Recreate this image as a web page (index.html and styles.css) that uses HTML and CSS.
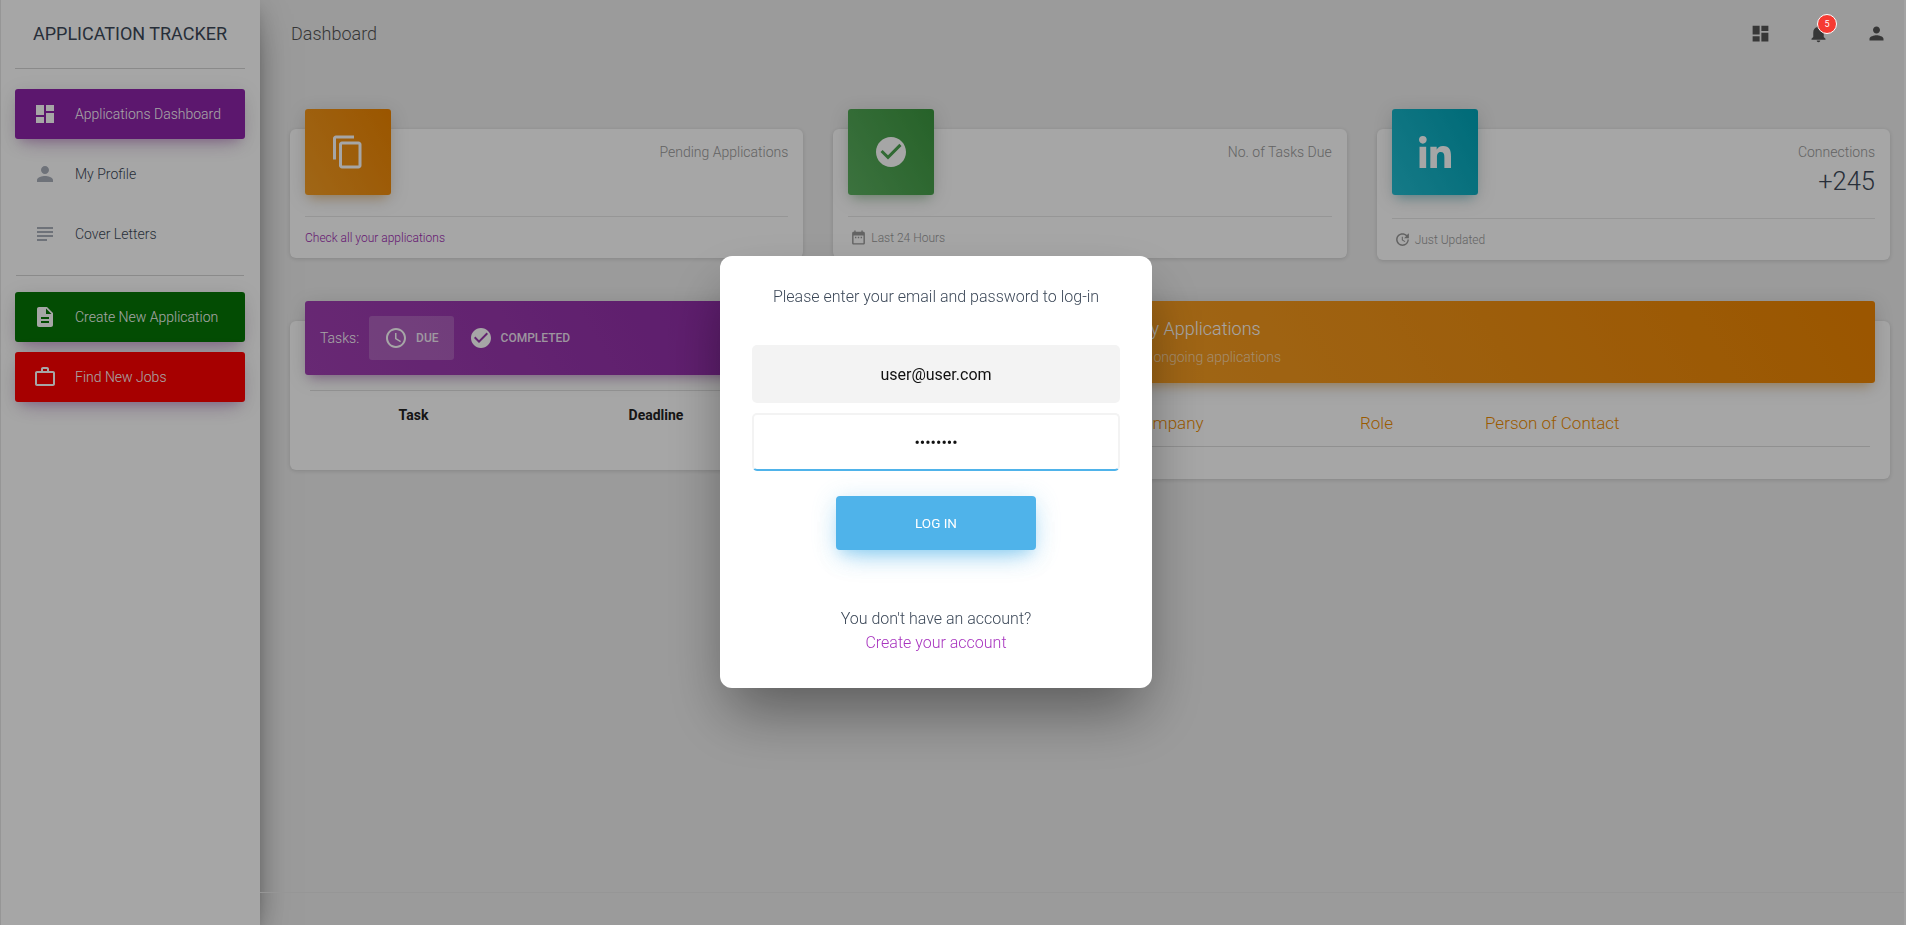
FILE: index.html
```html
<!DOCTYPE html>
<html lang="en">
<head>
  <meta charset="UTF-8">
  <title>Application Tracker</title>
  <link rel="stylesheet" href="styles.css">
</head>
<body>
  <div class="app">
    <aside class="sidebar">
      <div class="brand">APPLICATION TRACKER</div>
      <nav class="side-nav">
        <a class="side-link side-active" href="#">
          <svg class="icon" viewBox="0 0 24 24"><path d="M3 13h8V3H3v10zm0 8h8v-6H3v6zm10 0h8V11h-8v10zm0-18v6h8V3h-8z"/></svg>
          Applications Dashboard
        </a>
        <a class="side-link" href="#">
          <svg class="icon" viewBox="0 0 24 24"><path d="M12 12c2.21 0 4-1.79 4-4s-1.79-4-4-4-4 1.79-4 4 1.79 4 4 4zm0 2c-2.67 0-8 1.34-8 4v2h16v-2c0-2.66-5.33-4-8-4z"/></svg>
          My Profile
        </a>
        <a class="side-link" href="#">
          <svg class="icon" viewBox="0 0 24 24"><path d="M14 17H4v2h10v-2zm6-8H4v2h16V9zM4 15h16v-2H4v2zM4 5v2h16V5H4z"/></svg>
          Cover Letters
        </a>
      </nav>
      <div class="side-divider"></div>
      <nav class="side-nav">
        <a class="side-link side-green" href="#">
          <svg class="icon" viewBox="0 0 24 24"><path d="M14 2H6c-1.1 0-1.99.9-1.99 2L4 20c0 1.1.89 2 2 2h12c1.1 0 2-.9 2-2V8l-6-6zm2 16H8v-2h8v2zm0-4H8v-2h8v2zm-3-5V3.5L18.5 9H13z"/></svg>
          Create New Application
        </a>
        <a class="side-link side-red" href="#">
          <svg class="icon" viewBox="0 0 24 24"><path d="M14 6V4h-4v2h4zM4 8v11h16V8H4zm16-2c1.11 0 2 .89 2 2v11c0 1.11-.89 2-2 2H4c-1.11 0-2-.89-2-2l.01-11c0-1.11.88-2 1.99-2h4V4c0-1.11.89-2 2-2h4c1.11 0 2 .89 2 2v2h4z"/></svg>
          Find New Jobs
        </a>
      </nav>
    </aside>

    <main class="main">
      <header class="topbar">
        <span class="page-title">Dashboard</span>
        <div class="top-icons">
          <svg class="top-icon" viewBox="0 0 24 24"><path d="M3 13h8V3H3v10zm0 8h8v-6H3v6zm10 0h8V11h-8v10zm0-18v6h8V3h-8z"/></svg>
          <span class="bell">
            <svg class="top-icon" viewBox="0 0 24 24"><path d="M12 22c1.1 0 2-.9 2-2h-4c0 1.1.89 2 2 2zm6-6v-5c0-3.07-1.64-5.64-4.5-6.32V4c0-.83-.67-1.5-1.5-1.5s-1.5.67-1.5 1.5v.68C7.63 5.36 6 7.92 6 11v5l-2 2v1h16v-1l-2-2z"/></svg>
            <span class="badge">5</span>
          </span>
          <svg class="top-icon" viewBox="0 0 24 24"><path d="M12 12c2.21 0 4-1.79 4-4s-1.79-4-4-4-4 1.79-4 4 1.79 4 4 4zm0 2c-2.67 0-8 1.34-8 4v2h16v-2c0-2.66-5.33-4-8-4z"/></svg>
        </div>
      </header>

      <section class="stats">
        <div class="card stat-card">
          <div class="stat-head">
            <div class="stat-icon bg-orange">
              <svg class="stat-svg" viewBox="0 0 24 24"><path d="M16 1H4c-1.1 0-2 .9-2 2v14h2V3h12V1zm3 4H8c-1.1 0-2 .9-2 2v14c0 1.1.9 2 2 2h11c1.1 0 2-.9 2-2V7c0-1.1-.9-2-2-2zm0 16H8V7h11v14z"/></svg>
            </div>
            <div class="stat-text"><p class="stat-label">Pending Applications</p></div>
          </div>
          <div class="stat-foot"><a class="foot-link" href="#">Check all your applications</a></div>
        </div>

        <div class="card stat-card">
          <div class="stat-head">
            <div class="stat-icon bg-green">
              <svg class="stat-svg" viewBox="0 0 24 24"><path d="M12 2C6.48 2 2 6.48 2 12s4.48 10 10 10 10-4.48 10-10S17.52 2 12 2zm-2 15l-5-5 1.41-1.41L10 14.17l7.59-7.59L19 8l-9 9z"/></svg>
            </div>
            <div class="stat-text"><p class="stat-label">No. of Tasks Due</p></div>
          </div>
          <div class="stat-foot">
            <svg class="foot-icon" viewBox="0 0 24 24"><path d="M9 11H7v2h2v-2zm4 0h-2v2h2v-2zm4 0h-2v2h2v-2zm2-7h-1V2h-2v2H8V2H6v2H5c-1.11 0-1.99.9-1.99 2L3 20c0 1.1.89 2 2 2h14c1.1 0 2-.9 2-2V6c0-1.1-.9-2-2-2zm0 16H5V9h14v11z"/></svg>
            Last 24 Hours
          </div>
        </div>

        <div class="card stat-card">
          <div class="stat-head">
            <div class="stat-icon bg-teal">
              <svg class="linkedin" viewBox="0 0 448 448"><path d="M100.28 448H7.4V148.9h92.88zM53.79 108.1C24.09 108.1 0 83.5 0 53.8a53.79 53.79 0 0 1 107.58 0c0 29.7-24.1 54.3-53.79 54.3zM447.9 448h-92.68V302.4c0-34.7-.7-79.2-48.29-79.2-48.29 0-55.69 37.7-55.69 76.7V448h-92.78V148.9h89.08v40.8h1.3c12.4-23.5 42.69-48.3 87.88-48.3 94 0 111.28 61.9 111.28 142.3V448z"/></svg>
            </div>
            <div class="stat-text">
              <p class="stat-label">Connections</p>
              <h3 class="stat-value">+245</h3>
            </div>
          </div>
          <div class="stat-foot">
            <svg class="foot-icon" viewBox="0 0 24 24"><path d="M21 10.12h-6.78l2.74-2.82c-2.73-2.7-7.15-2.8-9.88-.1-2.73 2.71-2.73 7.08 0 9.79s7.15 2.71 9.88 0C18.32 15.65 19 14.08 19 12.1h2c0 1.98-.88 4.55-2.64 6.29-3.51 3.48-9.21 3.48-12.72 0-3.5-3.47-3.53-9.11-.02-12.58s9.14-3.47 12.65 0L21 3v7.12zM12.5 8v4.25l3.5 2.08-.72 1.21L11 13V8h1.5z"/></svg>
            Just Updated
          </div>
        </div>
      </section>

      <section class="panels">
        <div class="card panel">
          <div class="panel-head tasks-head bg-purple">
            <span class="tabs-label">Tasks:</span>
            <span class="tab tab-active">
              <svg class="icon" viewBox="0 0 24 24"><path d="M11.99 2C6.47 2 2 6.48 2 12s4.47 10 9.99 10C17.52 22 22 17.52 22 12S17.52 2 11.99 2zM12 20c-4.42 0-8-3.58-8-8s3.58-8 8-8 8 3.58 8 8-3.58 8-8 8zm.5-13H11v6l5.25 3.15.75-1.23-4.5-2.67z"/></svg>
              DUE
            </span>
            <span class="tab">
              <svg class="icon" viewBox="0 0 24 24"><path d="M12 2C6.48 2 2 6.48 2 12s4.48 10 10 10 10-4.48 10-10S17.52 2 12 2zm-2 15l-5-5 1.41-1.41L10 14.17l7.59-7.59L19 8l-9 9z"/></svg>
              COMPLETED
            </span>
          </div>
          <table class="tasks-table">
            <thead>
              <tr><th class="col-task">Task</th><th class="col-deadline">Deadline</th><th></th></tr>
            </thead>
          </table>
        </div>

        <div class="card panel">
          <div class="panel-head apps-head bg-orange">
            <h4 class="apps-title">My Applications</h4>
            <p class="apps-sub">All ongoing applications</p>
          </div>
          <table class="apps-table">
            <thead>
              <tr><th class="col-company">Company</th><th class="col-role">Role</th><th>Person of Contact</th></tr>
            </thead>
          </table>
        </div>
      </section>

      <footer class="page-foot"></footer>
    </main>
  </div>

  <div class="backdrop"></div>

  <div class="login-modal">
    <p class="login-text">Please enter your email and password to log-in</p>
    <form class="login-form" onsubmit="return false">
      <input class="login-input" type="email" value="user@user.com">
      <input class="login-input login-focus" type="password" value="password">
      <button class="login-btn" type="submit">LOG IN</button>
    </form>
    <p class="login-alt">You don't have an account?<br><a href="#">Create your account</a></p>
  </div>
</body>
</html>
```
FILE: styles.css
```css
* {
  box-sizing: border-box;
}

body {
  margin: 0;
  background: #eeeeee;
  font-family: Roboto, "Liberation Sans", sans-serif;
  font-weight: 300;
  font-size: 14px;
  color: #3c4858;
  overflow: hidden;
}

a {
  text-decoration: none;
}

p, h3, h4 {
  margin: 0;
}

.app {
  display: flex;
  height: 100vh;
}

/* sidebar */
.sidebar {
  width: 260px;
  flex-shrink: 0;
  border-left: 1px solid #e6e6e6;
  background: #ffffff;
  box-shadow: 0 16px 38px -12px rgba(0, 0, 0, 0.56), 0 4px 25px 0 rgba(0, 0, 0, 0.12), 0 8px 10px -5px rgba(0, 0, 0, 0.2);
}

.brand {
  height: 69px;
  margin: 0 15px 20px 14px;
  border-bottom: 1px solid #d5d5d5;
  font-size: 18px;
  font-weight: 400;
  line-height: 68px;
  text-align: center;
}

.side-nav {
  display: flex;
  flex-direction: column;
  gap: 10px;
  padding: 0 15px 0 14px;
}

.side-link {
  display: flex;
  align-items: center;
  gap: 18px;
  height: 50px;
  padding-left: 18px;
  border-radius: 3px;
  color: #3c4858;
  fill: #a9afbb;
}

.side-active {
  background: #8e24aa;
  color: #ffffff;
  fill: #ffffff;
  box-shadow: 0 12px 20px -10px rgba(156, 39, 176, 0.28), 0 4px 20px 0 rgba(0, 0, 0, 0.12), 0 7px 8px -5px rgba(156, 39, 176, 0.2);
}

.side-green {
  background: #067506;
  color: #ffffff;
  fill: #ffffff;
  box-shadow: 0 12px 20px -10px rgba(156, 39, 176, 0.28), 0 4px 20px 0 rgba(0, 0, 0, 0.12), 0 7px 8px -5px rgba(156, 39, 176, 0.2);
}

.side-red {
  background: #ff0000;
  color: #ffffff;
  fill: #ffffff;
  box-shadow: 0 12px 20px -10px rgba(156, 39, 176, 0.28), 0 4px 20px 0 rgba(0, 0, 0, 0.12), 0 7px 8px -5px rgba(156, 39, 176, 0.2);
}

.side-divider {
  height: 1px;
  margin: 16px 16px 16px 15px;
  background: #d5d5d5;
}

.icon {
  width: 24px;
  height: 24px;
  flex-shrink: 0;
}

/* main area */
.main {
  flex: 1;
  min-width: 0;
  display: flex;
  flex-direction: column;
  padding: 0 14px 0 30px;
  border-right: 2px solid #fafafa;
}

.topbar {
  display: flex;
  align-items: center;
  justify-content: space-between;
  height: 66px;
  margin-bottom: 63px;
  padding-left: 1px;
}

.page-title {
  font-size: 18px;
  color: #555555;
}

.top-icons {
  display: flex;
  align-items: center;
  gap: 37px;
  margin-right: 3px;
}

.top-icon {
  display: block;
  width: 21px;
  height: 21px;
  fill: #555555;
}

.bell {
  position: relative;
}

.badge {
  position: absolute;
  z-index: 20;
  top: -9px;
  right: -8px;
  width: 20px;
  height: 20px;
  border: 1px solid #ffffff;
  border-radius: 50%;
  background: #f63a32;
  color: #ffffff;
  font-size: 9px;
  font-weight: 400;
  line-height: 18px;
  text-align: center;
}

.card {
  background: #ffffff;
  border-radius: 6px;
  box-shadow: 0 1px 4px 0 rgba(0, 0, 0, 0.14);
}

.stats {
  display: grid;
  grid-template-columns: repeat(3, 1fr);
  gap: 30px;
  align-items: start;
  height: 131px;
  margin-bottom: 61px;
}

.stat-card {
  padding: 0 15px;
}

.stat-head {
  display: flex;
  justify-content: space-between;
  align-items: flex-start;
}

.stat-icon {
  display: flex;
  align-items: center;
  justify-content: center;
  width: 86px;
  height: 86px;
  margin: -20px 0 21px;
  border-radius: 3px;
}

.stat-svg {
  width: 36px;
  height: 36px;
  fill: #ffffff;
}

.linkedin {
  width: 32px;
  height: 32px;
  fill: #ffffff;
}

.bg-orange {
  background: linear-gradient(60deg, #f69e24, #ee8400);
  box-shadow: 0 4px 20px 0 rgba(0, 0, 0, 0.14), 0 7px 10px -5px rgba(255, 152, 0, 0.4);
}

.bg-green {
  background: linear-gradient(60deg, #5cb060, #3b963f);
  box-shadow: 0 4px 20px 0 rgba(0, 0, 0, 0.14), 0 7px 10px -5px rgba(76, 175, 80, 0.4);
}

.bg-teal {
  background: linear-gradient(60deg, #22bcd0, #00a4b8);
  box-shadow: 0 4px 20px 0 rgba(0, 0, 0, 0.14), 0 7px 10px -5px rgba(0, 172, 193, 0.4);
}

.bg-purple {
  background: linear-gradient(60deg, #a03fb2, #8420a0);
  box-shadow: 0 4px 20px 0 rgba(0, 0, 0, 0.14), 0 7px 10px -5px rgba(156, 39, 176, 0.4);
}

.stat-text {
  padding-top: 13px;
  text-align: right;
}

.stat-label {
  line-height: 20px;
  color: #999999;
}

.stat-value {
  margin: 4px 0 22px;
  font-size: 25.5px;
  font-weight: 300;
  line-height: 30px;
}

.stat-foot {
  display: flex;
  align-items: center;
  gap: 4px;
  height: 42px;
  border-top: 1px solid #e7e7e7;
  font-size: 12px;
  color: #999999;
}

.foot-link {
  color: #9c27b0;
}

.foot-icon {
  width: 17px;
  height: 17px;
  margin-left: 2px;
  fill: #999999;
}

/* tasks and applications */
.panels {
  display: grid;
  grid-template-columns: repeat(2, 1fr);
  gap: 30px;
  align-items: start;
}

.panel-head {
  margin: -20px 15px 0;
  border-radius: 3px;
  color: #ffffff;
}

.tasks-head {
  display: flex;
  align-items: center;
  height: 74px;
  padding-left: 15px;
}

.tabs-label {
  margin-right: 10px;
}

.tab {
  display: flex;
  align-items: center;
  gap: 8px;
  height: 44px;
  padding: 0 15px;
  border-radius: 3px;
  font-size: 12px;
  font-weight: 500;
  color: rgba(255, 255, 255, 0.88);
  fill: #ffffff;
}

.tab-active {
  background: rgba(255, 255, 255, 0.2);
}

.tasks-table,
.apps-table {
  border-collapse: collapse;
  table-layout: fixed;
}

.tasks-table {
  width: calc(100% - 40px);
  margin: 15px 20px 0;
  border-top: 1px solid #dddddd;
}

.tasks-table tr {
  height: 79px;
  vertical-align: top;
}

.tasks-table th {
  padding: 16px 0 0;
  font-size: 14px;
  font-weight: 700;
  color: #222222;
}

.col-task {
  width: 207px;
}

.col-deadline {
  width: 278px;
}

.apps-head {
  height: 82px;
  padding: 18px 15px 0;
}

.apps-title {
  font-size: 18px;
  font-weight: 300;
  line-height: 20px;
}

.apps-sub {
  margin-top: 8px;
  font-size: 14px;
  line-height: 20px;
  color: rgba(255, 255, 255, 0.62);
}

.apps-table {
  width: calc(100% - 35px);
  margin: 0 20px 32px 15px;
  border-bottom: 1px solid #dddddd;
}

.apps-table th {
  height: 63px;
  padding: 17px 12px 0;
  font-size: 17px;
  font-weight: 300;
  color: #ee8c00;
  text-align: left;
}

.col-company {
  width: 228px;
}

.col-role {
  width: 125px;
}

.page-foot {
  height: 33px;
  margin: auto -14px 0 -30px;
  border-top: 1px solid #e7e7e7;
}

/* login dialog */
.backdrop {
  position: fixed;
  z-index: 10;
  inset: 0;
  background: rgba(0, 0, 0, 0.35);
}

.login-modal {
  position: fixed;
  z-index: 30;
  top: 256px;
  left: 720px;
  width: 432px;
  padding: 29px 32px 33px;
  border-radius: 12px;
  background: #ffffff;
  box-shadow: 0 30px 60px -8px rgba(0, 0, 0, 0.42);
  text-align: center;
}

.login-text {
  font-size: 16px;
  line-height: 24px;
}

.login-form {
  display: flex;
  flex-direction: column;
  align-items: center;
  gap: 10px;
  margin-top: 36px;
}

.login-input {
  width: 100%;
  height: 58px;
  border: 0;
  border-radius: 5px;
  background: #f3f3f3;
  font-family: Roboto, "Liberation Sans", sans-serif;
  font-size: 16px;
  color: #111111;
  text-align: center;
}

.login-focus {
  border: 2px solid #f3f3f3;
  border-bottom-color: #4fb3ea;
  background: #ffffff;
}

.login-btn {
  width: 200px;
  height: 54px;
  margin-top: 15px;
  border: 0;
  border-radius: 4px;
  background: #4fb3ea;
  font-family: Roboto, "Liberation Sans", sans-serif;
  font-size: 13.5px;
  color: #ffffff;
  box-shadow: 0 14px 26px -12px rgba(79, 179, 234, 0.5), 0 4px 23px 0 rgba(79, 179, 234, 0.3), 0 8px 10px -5px rgba(79, 179, 234, 0.2);
}

.login-alt {
  margin-top: 57px;
  font-size: 16px;
  line-height: 24px;
}

.login-alt a {
  color: #a834bf;
}
```
